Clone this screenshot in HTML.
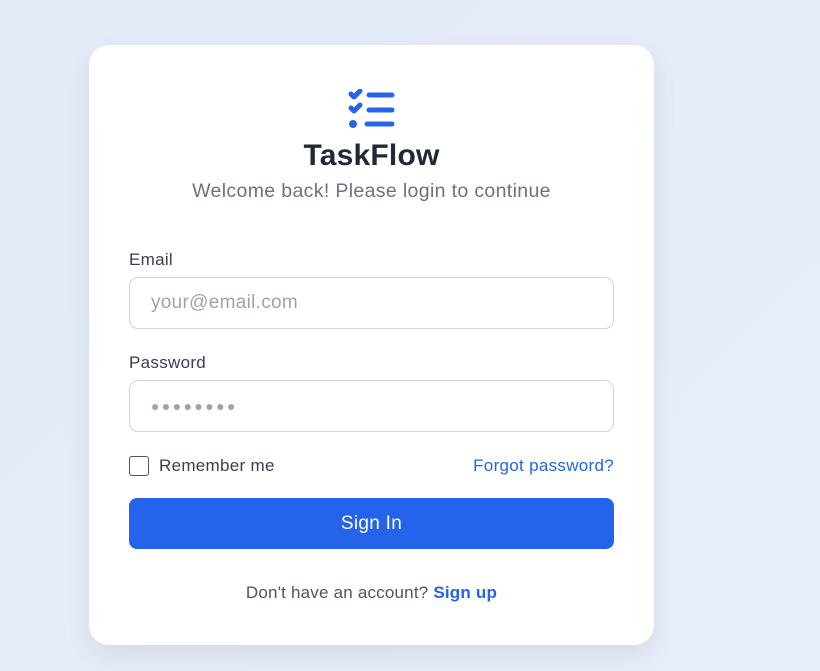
<!DOCTYPE html>
<html><head><style>
*{box-sizing:border-box;margin:0;padding:0}
body{width:820px;height:671px;background:linear-gradient(135deg,#e3eaf8,#e8eef9);font-family:"Liberation Sans",sans-serif;position:relative;overflow:hidden}
.card{position:absolute;left:89px;top:45px;width:565px;height:600px;background:#fff;border-radius:20px;box-shadow:0 10px 25px rgba(0,0,0,.08)}
.abs{position:absolute}
h1{position:absolute;left:0;width:565px;top:94px;text-align:center;font-size:30px;font-weight:bold;color:#1f2937;letter-spacing:0.2px}
.sub{left:0;width:565px;top:135px;text-align:center;font-size:19.5px;color:#6b7280;letter-spacing:0.35px}
.lbl{font-size:17px;color:#374151;left:40px;letter-spacing:0.3px}
.inp{left:40px;width:485px;height:52px;border:1px solid #d1d5db;border-radius:9px;font-size:19px;color:#9ca3af;padding:14px 21px;letter-spacing:0.3px}
.btn{left:40px;top:453px;width:485px;height:51px;background:#2563eb;border-radius:8px;color:#fff;font-size:19px;text-align:center;line-height:51px;letter-spacing:0.3px}
</style></head><body>
<div class="card">
<svg class="abs" style="left:258px;top:44px" width="50" height="42" viewBox="0 0 50 42">
<g stroke="#2563eb" stroke-width="5" stroke-linecap="round" stroke-linejoin="round" fill="none">
<path d="M4 5l3 3 6-6"/><path d="M4 19l3 3 6-6"/>
<path d="M22 6h23M22 21h23M20 35h25"/></g>
<circle cx="6" cy="35" r="4" fill="#2563eb"/></svg>
<h1>TaskFlow</h1>
<div class="abs sub">Welcome back! Please login to continue</div>
<div class="abs lbl" style="top:205px">Email</div>
<div class="abs inp" style="top:232px">your@email.com</div>
<div class="abs lbl" style="top:308px">Password</div>
<div class="abs inp" style="top:335px;font-size:14px;letter-spacing:2.4px;padding-top:17px;color:#9ca3af">●●●●●●●●</div>
<div class="abs" style="left:40px;top:411px;width:20px;height:20px;border:1.5px solid #4b5563;border-radius:3px"></div>
<div class="abs" style="left:70px;top:411px;font-size:17px;color:#374151;letter-spacing:0.3px">Remember me</div>
<div class="abs" style="right:40px;top:411px;font-size:17px;color:#2563eb;letter-spacing:0.3px">Forgot password?</div>
<div class="abs btn">Sign In</div>
<div class="abs" style="left:0;width:565px;top:538px;text-align:center;font-size:17px;color:#4b5563;letter-spacing:0.2px">Don't have an account? <span style="color:#2563eb;font-weight:bold">Sign up</span></div>
</div>
</body></html>
